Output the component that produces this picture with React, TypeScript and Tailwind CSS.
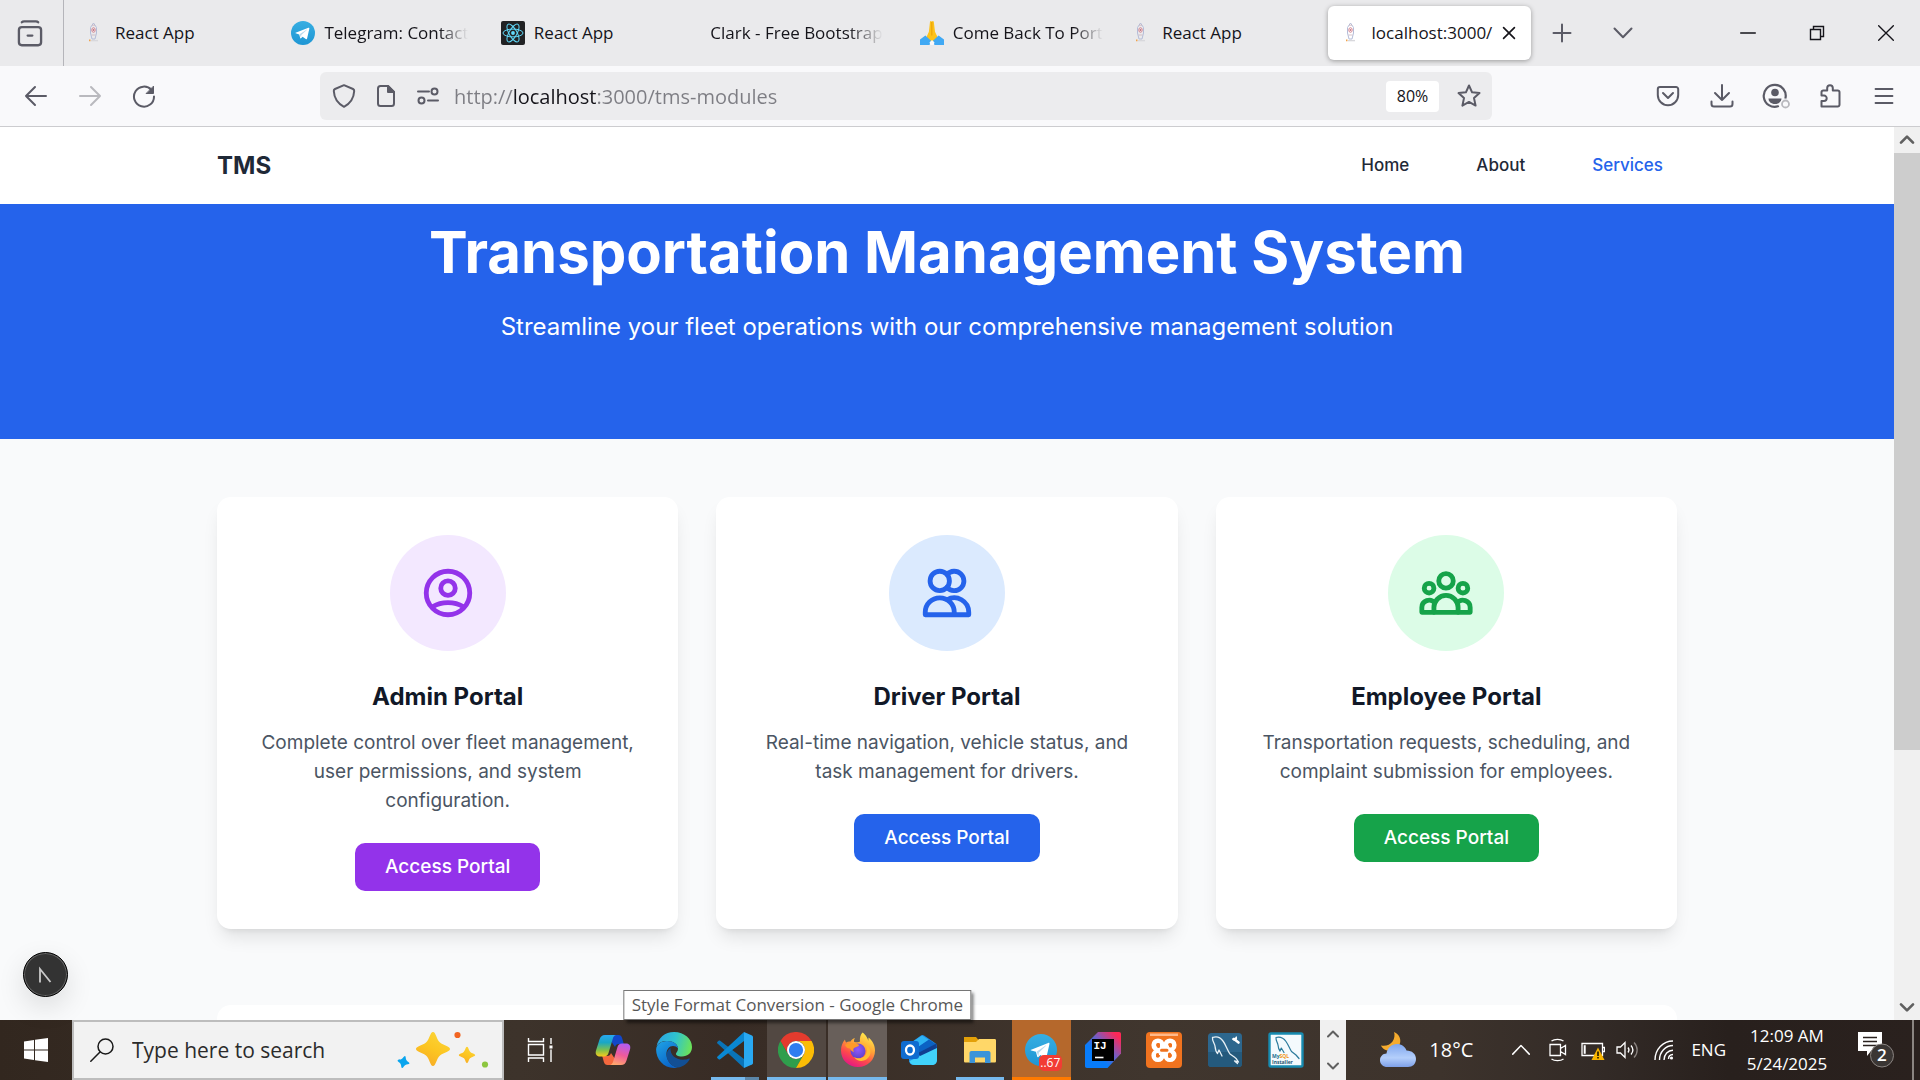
import React from "react";

const osFont = "font-['Open_Sans',sans-serif]";

/* ---------- browser icons ---------- */

function EmblemIcon() {
  return (
    <svg viewBox="0 0 24 24" className="size-6 shrink-0" fill="none" aria-hidden="true">
      <path d="M8.500 6.500 11.500 2l3 4.500v5.500l-1.500 6h-3l-1.500-6z" stroke="#b4bcd8" strokeWidth="1" />
      <path d="M10 4.200h3M9.500 14h4" stroke="#cdb4bd" strokeWidth=".8" />
      <ellipse cx="11.500" cy="9" rx="1.700" ry="2.300" stroke="#d68590" strokeWidth="1" />
      <circle cx="11.500" cy="9" r=".7" fill="#b33a4c" />
      <path d="M7 19.300h1.500" stroke="#f0a24b" strokeWidth="1.800" />
      <path d="M9 19.600h7" stroke="#d8d8dc" strokeWidth="1.400" />
    </svg>
  );
}

function TelegramLogo({ className }: { className: string }) {
  return (
    <svg viewBox="0 0 24 24" className={className} aria-hidden="true">
      <defs>
        <linearGradient id="tg" x1="0" y1="0" x2="0" y2="1">
          <stop offset="0" stopColor="#37aee2" />
          <stop offset="1" stopColor="#1e96d4" />
        </linearGradient>
      </defs>
      <circle cx="12" cy="12" r="12" fill="url(#tg)" />
      <path
        d="M4.600 11.800 17.400 6.700c.7-.2 1.100.1.9 1l-2.200 9.800c-.2.8-.7 1-1.300.6l-3.200-2.400-1.600 1.600c-.3.3-.7.2-.8-.2l-1-3.700-3.500-1.100c-.7-.2-.7-.3-.1-.5z"
        fill="#fff"
      />
      <path d="m8.600 13.300 6.900-4.600c.3-.2.600 0 .3.200l-5.500 5.200-.2 2.600z" fill="#b8d9ee" />
    </svg>
  );
}

function ReactLogo() {
  return (
    <svg viewBox="0 0 24 24" className="size-6 shrink-0" fill="none" aria-hidden="true">
      <rect width="24" height="24" rx="2" fill="#212224" />
      <circle cx="12" cy="12" r="1.900" fill="#61dafb" />
      <g stroke="#61dafb" strokeWidth="1">
        <ellipse cx="12" cy="12" rx="10" ry="3.900" />
        <ellipse cx="12" cy="12" rx="10" ry="3.900" transform="rotate(60 12 12)" />
        <ellipse cx="12" cy="12" rx="10" ry="3.900" transform="rotate(120 12 12)" />
      </g>
    </svg>
  );
}

function PrayLogo() {
  return (
    <svg viewBox="0 0 24 24" className="size-6 shrink-0" aria-hidden="true">
      <path d="M10 .8c.2-.9 1.400-.9 1.800-.1.500-.8 1.800-.8 2 .1l1.200 10 2.600 5.500-3.600 4.200h-4l-3.600-4.200L8.900 10.800z" fill="#fcc21b" />
      <path d="M11.800 1v13.500" stroke="#e59600" strokeWidth=".8" />
      <path d="M0 24v-5.500L5.400 14.500l5.600 5.200-1.500 4.300zM24 24v-5.500l-5.400-4-5.600 5.200 1.500 4.300z" fill="#40a9f4" />
      <path d="M9.500 21.500 12 19l2.500 2.500L13.500 24h-3z" fill="#f9f9fb" />
    </svg>
  );
}

type Stroke = { children: React.ReactNode; className?: string; width?: number };

function Line({ children, className = "size-6", width = 2 }: Stroke) {
  return (
    <svg
      viewBox="0 0 24 24"
      className={"shrink-0 " + className}
      fill="none"
      stroke="currentColor"
      strokeWidth={width}
      strokeLinecap="round"
      strokeLinejoin="round"
      aria-hidden="true"
    >
      {children}
    </svg>
  );
}

function BrowserTab({ title, icon, fade = false }: { title: string; icon?: React.ReactNode; fade?: boolean }) {
  return (
    <button
      role="tab"
      aria-selected="false"
      className="flex h-full min-w-0 items-center gap-[9px] pl-[14px] text-left"
    >
      {icon}
      <span className={"whitespace-nowrap " + (fade ? "mask-r-from-80% mask-r-to-100%" : "")}>{title}</span>
    </button>
  );
}

function TabStrip() {
  return (
    <div className="flex h-[66px] shrink-0 items-center bg-[#eaeaec] text-[17px] text-[#15141a]">
      <button aria-label="Firefox View" className="flex h-full w-[64px] shrink-0 items-center justify-center border-r border-[#b5b5ba] pr-1 text-[#5b5b66]">
        <Line className="size-7">
          <rect x="2.500" y="7" width="19" height="15.500" rx="2.500" />
          <path d="M10 14.200h4M5 2.800c.6-.7 1.200-.8 2-.8h10c.8 0 1.400.1 2 .8" />
        </Line>
      </button>
      <div role="tablist" aria-label="Open tabs" className="ml-1 grid h-full w-[1466px] min-w-0 grid-cols-7 items-center">
        <BrowserTab title="React App" icon={<EmblemIcon />} />
        <BrowserTab title="Telegram: Contact" fade icon={<TelegramLogo className="size-6 shrink-0" />} />
        <BrowserTab title="React App" icon={<ReactLogo />} />
        <BrowserTab title="Clark - Free Bootstrap" fade />
        <BrowserTab title="Come Back To Port" fade icon={<PrayLogo />} />
        <BrowserTab title="React App" icon={<EmblemIcon />} />
        <div className="min-w-0 px-[3px]">
          <div className="flex h-[54px] items-center justify-between rounded-md bg-white pr-3 shadow-[0_1px_5px_rgba(0,0,0,0.35)]">
            <button role="tab" aria-selected="true" className="flex h-full items-center gap-[9px] pl-[11px] text-left whitespace-nowrap">
              <EmblemIcon />
              localhost:3000/
            </button>
            <button aria-label="Close tab" className="flex h-full shrink-0 items-center justify-center">
              <Line className="size-5">
                <path d="m5.500 5.500 13 13m0-13-13 13" />
              </Line>
            </button>
          </div>
        </div>
      </div>
      <button aria-label="New tab" className="ml-[2px] flex h-full w-[52px] items-center justify-center text-[#5b5b66]">
        <Line className="size-6">
          <path d="M12 3.500v17M3.500 12h17" />
        </Line>
      </button>
      <button aria-label="List all tabs" className="ml-[9px] flex h-full w-[52px] items-center justify-center text-[#5b5b66]">
        <Line className="size-6">
          <path d="m3.500 7.500 8.500 8.700 8.500-8.700" />
        </Line>
      </button>
      <div className="ml-auto flex h-full">
        <button aria-label="Minimize" className="flex w-[69px] items-center justify-center">
          <Line className="size-4" width={2}>
            <path d="M1 12h22" />
          </Line>
        </button>
        <button aria-label="Restore" className="flex w-[69px] items-center justify-center">
          <svg viewBox="0 0 16 16" className="size-4" fill="none" stroke="currentColor" strokeWidth="1.400" aria-hidden="true">
            <path d="M1.500 4.500h10v10h-10zM4.500 4.500v-3h10v10h-3" />
          </svg>
        </button>
        <button aria-label="Close window" className="flex w-[69px] items-center justify-center">
          <Line className="size-4">
            <path d="m1 1 22 22m0-22L1 23" />
          </Line>
        </button>
      </div>
    </div>
  );
}

const toolButton = "flex h-full w-[54px] items-center justify-center";

function Toolbar() {
  return (
    <div className="flex h-[61px] shrink-0 items-center border-b border-[#cccccf] bg-[#f9f9fb] px-[9px] text-[#5b5b66]">
      <button aria-label="Back" className={toolButton}>
        <Line className="size-6"><path d="M22 12H2m9-9-9 9 9 9" /></Line>
      </button>
      <button aria-label="Forward" disabled className={toolButton + " text-[#b9b9be]"}>
        <Line className="size-6"><path d="M2 12h20m-9-9 9 9-9 9" /></Line>
      </button>
      <button aria-label="Reload" className={toolButton}>
        <Line className="size-6">
          <path d="M19.500 6A10 10 0 1 0 22 12.500" />
          <path d="M21.500 2.500v7h-7z" fill="currentColor" strokeWidth="1" />
        </Line>
      </button>
      <div className="ml-[149px] flex h-12 min-w-0 flex-1 items-center rounded-md bg-[#ececee] pl-[3px]">
        <span className="flex w-[42px] justify-center">
          <Line className="size-6">
            <path d="M12 1.200 21 5c1 .5 1.300 1 1.200 2-.3 6-2.700 11.800-10.200 15.800C4.500 18.800 2.100 13 1.800 7c-.1-1 .2-1.500 1.200-2z" />
          </Line>
        </span>
        <span className="flex w-[42px] justify-center">
          <Line className="size-6">
            <path d="M14 2H6.500A2.500 2.500 0 0 0 4 4.500v15A2.500 2.500 0 0 0 6.500 22h11a2.500 2.500 0 0 0 2.500-2.500V8z" />
            <path d="M14 2v6h6z" fill="currentColor" />
          </Line>
        </span>
        <span className="flex w-[42px] justify-center">
          <Line className="size-6">
            <path d="M2 7.500h11M12 16.500h10" />
            <circle cx="18.500" cy="7.500" r="3" />
            <circle cx="5.500" cy="16.500" r="3" />
          </Line>
        </span>
        <input
          aria-label="Address"
          defaultValue="http://localhost:3000/tms-modules"
          className="ml-[5px] h-full min-w-0 flex-1 bg-[linear-gradient(90deg,#7d7d83_58px,#15141a_58px,#15141a_142px,#7d7d83_142px)] bg-clip-text text-[20px] text-transparent outline-none"
        />
        <button className="h-[31px] w-[53px] rounded bg-white text-[16px] text-[#15141a]">80%</button>
        <button aria-label="Bookmark this page" className="ml-[7px] flex w-[46px] justify-center">
          <Line className="size-6">
            <path d="m12 1.500 3.100 6.800 7.400.8-5.500 5 1.600 7.500L12 17.900l-6.600 3.700L7 14.100l-5.500-5 7.400-.8z" />
          </Line>
        </button>
      </div>
      <div className="ml-[149px] flex h-full">
        <button aria-label="Save to Pocket" className={toolButton}>
          <Line className="size-6">
            <path d="M4 3h16a2.200 2.200 0 0 1 2.200 2.200V11a10.200 10.200 0 0 1-20.400 0V5.200A2.200 2.200 0 0 1 4 3z" />
            <path d="m7 9 5 5 5-5" />
          </Line>
        </button>
        <button aria-label="Downloads" className={toolButton}>
          <Line className="size-6"><path d="M12 1v15m-7-7 7 7 7-7M1.500 17.500v2.500A2.500 2.500 0 0 0 4 22.500h16a2.500 2.500 0 0 0 2.500-2.500v-2.500" /></Line>
        </button>
        <button aria-label="Account" className={toolButton}>
          <svg viewBox="0 0 28 26" className="h-[26px] w-7" fill="none" aria-hidden="true">
            <path d="M16 23.300A11 11 0 1 1 23.500 15" stroke="currentColor" strokeWidth="2.200" strokeLinecap="round" />
            <circle cx="13" cy="9.500" r="3.800" fill="currentColor" />
            <path d="M6.500 15.500h13c0 3-2.500 5.500-6.500 5.500s-6.500-2.500-6.500-5.500z" fill="currentColor" />
            <circle cx="23.500" cy="21" r="5.500" fill="#f9f9fb" />
            <circle cx="23.500" cy="21" r="3.500" stroke="#b9b9be" strokeWidth="1.800" />
          </svg>
        </button>
        <button aria-label="Extensions" className={toolButton}>
          <Line className="size-6">
            <path d="M3.500 22.500V17H6a2.700 2.700 0 0 0 0-5.400H3.500V8.200A1.700 1.700 0 0 1 5.200 6.500h4V4a2.800 2.800 0 0 1 5.600 0v2.500h5a1.700 1.700 0 0 1 1.700 1.700v12.600a1.700 1.700 0 0 1-1.700 1.700z" />
          </Line>
        </button>
        <button aria-label="Open application menu" className={toolButton}>
          <Line className="size-6" width={1.8}><path d="M3.500 5h17M3.500 12h17M3.500 19h17" /></Line>
        </button>
      </div>
    </div>
  );
}

/* ---------- page ---------- */

const portals = [
  {
    name: "Admin Portal",
    text: "Complete control over fleet management, user permissions, and system configuration.",
    circle: "bg-[#f3e8ff] text-[#9333ea]",
    button: "bg-[#9333ea]",
    icon: (
      <>
        <circle cx="12" cy="12" r="9" />
        <circle cx="12" cy="10" r="3" />
        <path d="M5.800 17.600C7.400 16.600 9.500 16 12 16s4.600.6 6.200 1.600" />
      </>
    ),
  },
  {
    name: "Driver Portal",
    text: "Real-time navigation, vehicle status, and task management for drivers.",
    circle: "bg-[#dbeafe] text-[#2563eb]",
    button: "bg-[#2563eb]",
    icon: (
      <>
        <circle cx="9" cy="7" r="4" />
        <path d="M12 4.354a4 4 0 1 1 0 5.292" />
        <path d="M3 21v-1a6 6 0 0 1 12 0v1zM12 14.803A6 6 0 0 1 21 20v1h-6" />
      </>
    ),
  },
  {
    name: "Employee Portal",
    text: "Transportation requests, scheduling, and complaint submission for employees.",
    circle: "bg-[#dcfce7] text-[#16a34a]",
    button: "bg-[#16a34a]",
    icon: (
      <>
        <circle cx="12" cy="7" r="3" />
        <circle cx="5" cy="10" r="2" />
        <circle cx="19" cy="10" r="2" />
        <path d="M7 20v-2a5 5 0 0 1 10 0v2z" />
        <path d="M17 20h5v-2a3 3 0 0 0-5.356-1.857M7 20H2v-2a3 3 0 0 1 5.356-1.857" />
      </>
    ),
  },
];

const container = "mx-auto w-full max-w-[1536px] px-[38px]";

function Page() {
  return (
    <div className="h-full overflow-hidden bg-[#f9fafb] font-[Inter,sans-serif]">
      <header className="bg-white">
        <div className={container + " flex h-[77px] items-center justify-between"}>
          <span className="text-2xl font-bold text-[#1f2937]">TMS</span>
          <nav className="flex gap-[39px] text-[17px] font-medium">
            <a href="#home" className="px-[14px] text-[#1f2937]">Home</a>
            <a href="#about" className="px-[14px] text-[#1f2937]">About</a>
            <a href="#services" className="px-[14px] text-[#2563eb]">Services</a>
          </nav>
        </div>
      </header>
      <section className="bg-[#2563eb] pt-[19px] pb-[95px] text-center text-white">
        <h1 className="mb-[29px] text-[58px] leading-[58px] font-bold">Transportation Management System</h1>
        <p className="text-2xl leading-[34px]">Streamline your fleet operations with our comprehensive management solution</p>
      </section>
      <main className={container + " pt-[58px]"}>
        <div className="grid grid-cols-3 gap-[38px]">
          {portals.map((p) => (
            <article
              key={p.name}
              className="flex flex-col items-center rounded-[14px] bg-white p-[38px] text-center shadow-[0_12px_18px_-4px_rgba(0,0,0,0.1),0_5px_7px_-5px_rgba(0,0,0,0.1)]"
            >
              <div className={"mb-[29px] flex size-[116px] items-center justify-center rounded-full " + p.circle}>
                <Line className="size-[58px]">{p.icon}</Line>
              </div>
              <h2 className="mb-[14px] text-2xl leading-[34px] font-bold text-[#111827]">{p.name}</h2>
              <p className="mb-7 text-[19px] leading-[29px] text-[#4b5563]">{p.text}</p>
              <button className={"h-12 rounded-[10px] px-[30px] text-[19px] font-medium text-white " + p.button}>Access Portal</button>
            </article>
          ))}
        </div>
        <div className="mt-[76px] h-24 rounded-[14px] bg-white" />
      </main>
    </div>
  );
}

function ScrollBar() {
  return (
    <div className="flex w-[26px] shrink-0 flex-col bg-[#f0f0f0] text-[#606060]">
      <button aria-label="Scroll up" className="flex h-[26px] items-center justify-center">
        <Line className="size-4" width={4}><path d="m3 16 9-9 9 9" /></Line>
      </button>
      <div className="flex-1">
        <div className="h-[71%] bg-[#cdcdcd]" />
      </div>
      <button aria-label="Scroll down" className="flex h-[26px] items-center justify-center">
        <Line className="size-4" width={4}><path d="m3 8 9 9 9-9" /></Line>
      </button>
    </div>
  );
}

/* ---------- taskbar icons ---------- */

function CopilotLogo() {
  return (
    <svg viewBox="0 0 36 36" className="size-9" aria-hidden="true">
      <defs>
        <linearGradient id="cpA" x1="0" y1="0" x2="0" y2="1">
          <stop offset="0" stopColor="#29a8f0" />
          <stop offset=".35" stopColor="#1aa7c4" />
          <stop offset=".7" stopColor="#7fc04b" />
          <stop offset="1" stopColor="#f7cb1c" />
        </linearGradient>
        <linearGradient id="cpB" x1=".6" y1="0" x2=".3" y2="1">
          <stop offset="0" stopColor="#b45cf0" />
          <stop offset=".5" stopColor="#ef5a9b" />
          <stop offset="1" stopColor="#ffa86c" />
        </linearGradient>
      </defs>
      <path d="M12 3h11.500c2 0 3 1 3.600 3l1.700 6H24c-2.500 0-3.300 1-4 3z" fill="#1247c9" />
      <path d="M24 33H12.500c-2 0-3-1-3.600-3l-1.700-6H12c2.500 0 3.300-1 4-3z" fill="#f4683e" />
      <path d="M10 3h11c-2 .5-2.700 2-3.300 4l-4.200 14c-.7 2.300-2 3.500-4.500 3.500H5c-3.500 0-5-2.500-4-6L4.500 7.500C5.500 4.500 7 3 10 3z" fill="url(#cpA)" />
      <path d="M26 33H15c2-.5 2.700-2 3.300-4l4.200-14c.7-2.300 2-3.500 4.500-3.500h4c3.500 0 5 2.500 4 6l-3.500 11c-1 3-2.500 4.500-5.500 4.500z" fill="url(#cpB)" />
    </svg>
  );
}

function EdgeLogo() {
  return (
    <svg viewBox="0 0 36 36" className="size-9" aria-hidden="true">
      <defs>
        <linearGradient id="edA" x1="0" y1=".3" x2="1" y2=".5">
          <stop offset="0" stopColor="#2ba4e4" />
          <stop offset=".5" stopColor="#2fc3cf" />
          <stop offset="1" stopColor="#6be35a" />
        </linearGradient>
        <linearGradient id="edB" x1="0" y1="0" x2=".6" y2="1">
          <stop offset="0" stopColor="#1fa4e6" />
          <stop offset="1" stopColor="#0a64c8" />
        </linearGradient>
      </defs>
      <path d="M.5 14.500C2 6 9 0 18 0c10.500 0 18 7 18 15 0 6-4.500 9.500-10 9.500-4.500 0-6.500-1.500-6-3 .6-1.500 2-2.500 2-5 0-4-4.500-7.500-11-7.500C6 9 2 11 .5 14.500z" fill="url(#edA)" />
      <path d="M.1 17.500C.3 12.500 5 9 11 9c6.500 0 11 3.500 11 7.500-1.500-1.800-3-2.500-5-2.500-4 0-7 4-6.500 9 .5 6 5 11.500 11.500 12.500C9.500 38 .1 28.500.1 17.500z" fill="url(#edB)" />
      <path d="M14.500 16c-2 1.500-4.200 4-4 7.500.4 6 5.500 11.500 11.500 12 5-.8 9.500-4 11.700-8.300.4-.7-.2-1-.8-.7-1.500.8-3.600 1.200-5.900 1.200-7.500 0-13-4.700-12.500-11.700z" fill="#124f94" />
    </svg>
  );
}

function VsCodeLogo() {
  return (
    <svg viewBox="0 0 36 36" className="size-9" aria-hidden="true">
      <path d="M27 36 .5 11.600c-.6-.5-.6-1.300 0-1.800L1.600 8.800c.5-.4 1.100-.4 1.600 0L27 27z" fill="#0a74b8" />
      <path d="M27 0 .5 24.400c-.6.5-.6 1.300 0 1.800l1.100 1c.5.400 1.100.400 1.600 0L27 9z" fill="#0a88d2" />
      <path d="m27 0 8 3.500c.6.300 1 .9 1 1.600v25.800c0 .7-.4 1.300-1 1.600L27 36z" fill="#29a9f2" />
    </svg>
  );
}

function ChromeLogo() {
  return (
    <svg viewBox="0 0 48 48" className="size-9" aria-hidden="true">
      <path d="M3.200 12A24 24 0 0 1 44.800 12H24A12 12 0 0 0 13.600 30z" fill="#e33b2e" />
      <path d="M24 48a24 24 0 0 1-20.800-36l10.400 18A12 12 0 0 0 34.400 30z" fill="#2f9e4c" />
      <path d="M44.800 12A24 24 0 0 1 24 48l10.400-18A12 12 0 0 0 24 12z" fill="#fbbc05" />
      <circle cx="24" cy="24" r="12" fill="#fff" />
      <circle cx="24" cy="24" r="9.500" fill="#2f7df0" />
    </svg>
  );
}

function FirefoxLogo() {
  return (
    <svg viewBox="0 0 36 36" className="size-9" aria-hidden="true">
      <defs>
        <linearGradient id="ffA" x1=".8" y1="0" x2=".3" y2="1">
          <stop offset="0" stopColor="#fff44f" />
          <stop offset=".4" stopColor="#ffa436" />
          <stop offset=".7" stopColor="#ff4a4b" />
          <stop offset="1" stopColor="#e31587" />
        </linearGradient>
        <radialGradient id="ffB" cx=".5" cy=".4" r=".7">
          <stop offset="0" stopColor="#9059ff" />
          <stop offset="1" stopColor="#5b3fc0" />
        </radialGradient>
      </defs>
      <path d="M22.500.5c4 3 5 6 6 8.500-.2-1.500-.1-2.500.2-3.500C33 9 35 14 35 18.500 35 28 27.500 35 18 35S1 28 1 18.500c0-4.500 1.500-8 4-11 .2 1.500.6 2.300 1.200 3C7.500 9.500 9 9.200 10.500 9.500c1-1.800 2.600-3 4.500-3.500-1 1.500-1.200 2.800-.8 4 2.800.6 5 .2 5.800-.5C19.500 6 20.500 2.500 22.500.5z" fill="url(#ffA)" />
      <circle cx="18" cy="19" r="7.500" fill="url(#ffB)" />
      <path d="M5 13c3-2 6.500-2.500 9.200-1.500 2.300-.2 4 .5 5 1.800-1.200 1.600-3.200 1.500-4.700 2.500-1.500.9-1.500 2.500-.5 4.200-2-.5-3.500-2-4-3.500-2 0-4-1-5-3.500z" fill="#ff9a28" />
      <path d="M24 11.500c3.500 3 4 8.500 1 12-2.500 3-7.500 3.800-11 1.500 4 6 13 5 16-2 1.500-4-.5-9.500-6-11.500z" fill="#ffbd30" />
    </svg>
  );
}

function OutlookLogo() {
  return (
    <svg viewBox="0 0 36 36" className="size-9" aria-hidden="true">
      <path d="M8 12 20 3.500c1-.7 2-.7 3 0L34 11c1.200.8 2 2 2 3.500V27c0 3.500-2.500 6-6 6H13c-3 0-5-2-5-5z" fill="#1f8fe8" />
      <path d="m9 11.500 12-8 7 4.500-14 9.500z" fill="#2fb4f4" />
      <path d="m14 17 14-9.500 7 4.800L18 23z" fill="#0b62c4" />
      <path d="m17 21 18.500-9.500.5 5L20 26z" fill="#103f91" />
      <path d="M36 16v12c0 3-2 5-5 5H14c-3 0-5-1.500-5.500-4z" fill="#41d3fb" />
      <rect y="9" width="18" height="18" rx="3" fill="#0f6cd0" />
      <ellipse cx="9" cy="18" rx="4" ry="4.500" fill="none" stroke="#fff" strokeWidth="2.300" />
    </svg>
  );
}

function ExplorerLogo() {
  return (
    <svg viewBox="0 0 36 36" className="size-9" aria-hidden="true">
      <path d="M2 5h12l3 3.500V14H2z" fill="#e3a008" />
      <path d="M17 7h15.500c1 0 1.500.5 1.500 1.500V29c0 1-.5 1.500-1.500 1.500h-29C2.500 30.500 2 30 2 29V10h12z" fill="#ffd768" />
      <path d="M7.500 31V21c0-1.200.8-2 2-2h17c1.200 0 2 .8 2 2v10h-5.500v-5.500H13V31z" fill="#3b94d9" />
    </svg>
  );
}

function IntelliJLogo() {
  return (
    <span className="relative flex size-9 items-center justify-center">
      <svg viewBox="0 0 36 36" className="size-9" aria-hidden="true">
        <defs>
          <linearGradient id="ijA" x1="0" y1="1" x2="1" y2="0">
            <stop offset=".35" stopColor="#087cfa" />
            <stop offset=".6" stopColor="#7a5bc0" />
            <stop offset=".9" stopColor="#fe2857" />
          </linearGradient>
        </defs>
        <path d="M13 0h21c1.300 0 2 .7 2 2v19.500L22.500 36H2c-1.300 0-2-.7-2-2V13z" fill="url(#ijA)" />
        <rect x="7" y="7" width="22" height="22" fill="#000" />
        <path d="M10 25.500h8.500" stroke="#fff" strokeWidth="1.600" />
      </svg>
      <span className="absolute top-[8px] left-[9px] font-['Liberation_Mono',monospace] text-[11px] leading-3 font-bold text-white">IJ</span>
    </span>
  );
}

function XamppLogo() {
  return (
    <svg viewBox="0 0 36 36" className="size-9" aria-hidden="true">
      <rect width="36" height="36" rx="4" fill="#f0731f" />
      <path d="M4 1.500h28v2.500H4z" fill="#ffb98a" />
      <g stroke="#fff" strokeWidth="4.600" fill="none" strokeLinejoin="round">
        <circle cx="12" cy="13" r="4.300" />
        <circle cx="24" cy="13" r="4.300" />
        <circle cx="12" cy="23.500" r="4.300" />
        <circle cx="24" cy="23.500" r="4.300" />
      </g>
      <path d="M13 13.500h10v9.500H13z" fill="#fff" />
      <path d="M12.500 12.500v2M23.500 22v2.500M11.500 24v-1.500M24.500 13v1M15.500 18.200h5.500" stroke="#f0731f" strokeWidth="3" strokeLinecap="round" />
    </svg>
  );
}

function WorkbenchLogo() {
  return (
    <svg viewBox="0 0 36 36" className="size-9" fill="none" aria-hidden="true">
      <rect x="1" y="1" width="34" height="34" rx="3.500" fill="#2d678e" />
      <path d="M1 20h34v11.500a3.500 3.500 0 0 1-3.500 3.500h-27A3.500 3.500 0 0 1 1 31.500z" fill="#245a7d" />
      <path d="M5.500 5.500c4-1.500 8 0 10.500 3.500 3 4 4 8.500 7 13l5 3.500c1.500 1 2.500 3 3.500 4.500l-4-1 3 2.500M5.500 5.500C5 9 7.500 11 8 14c.3 2.500.5 5.500 2.500 7.500L12 18l3 6" stroke="#e8f1f6" strokeWidth="1.300" strokeLinecap="round" strokeLinejoin="round" />
      <path d="m27 7 4.500 3.500" stroke="#fff" strokeWidth="2.600" strokeLinecap="round" />
      <path d="M24.800 6.500a2.800 2.800 0 0 0 4.200 1.800 2.800 2.800 0 0 0 .2-4.300l-1.400 2.200z" fill="#fff" />
    </svg>
  );
}

function InstallerLogo() {
  return (
    <svg viewBox="0 0 36 36" className="size-9" fill="none" aria-hidden="true">
      <rect x="1.500" y="1.500" width="33" height="33" rx="1.500" fill="#f4fafd" stroke="#178bb0" strokeWidth="2.400" />
      <path d="M8 5.500c4-1 7.500.5 10 4 2.500 3.600 3.300 6.500 5.500 10l4.500 3.500 3 3.500M8 5.500c-.3 3 1.500 5 2 7.500.2 2.300.6 4.300 2 6l1.300-3L16 20.500" stroke="#2b7a9b" strokeWidth="1.200" strokeLinecap="round" strokeLinejoin="round" />
      <text x="4" y="26" fontSize="5" fontWeight="700" fontFamily="Open Sans, sans-serif" fill="#1c6d92">
        My<tspan fill="#f29111">SQL</tspan>
      </text>
      <text x="4" y="31.500" fontSize="5" fontWeight="700" fontFamily="Open Sans, sans-serif" fill="#1c5672">Installer</text>
    </svg>
  );
}

function Sparkles() {
  const star = "M0-17C3-17 3.500-9 7-6.500 10-3.500 17-3 17 0S10 3.500 7 6.500C3.500 9 3 17 0 17s-3.500-8-7-10.500C-10 3.500-17 3-17 0s7-3.500 10-6.500C-3.500-9-3-17 0-17z";
  return (
    <svg viewBox="0 0 92 40" className="h-10 w-[92px] shrink-0" aria-hidden="true">
      <defs>
        <linearGradient id="spk" x1=".2" y1="1" x2=".7" y2="0">
          <stop offset="0" stopColor="#f7a928" />
          <stop offset=".5" stopColor="#fcc521" />
          <stop offset="1" stopColor="#fbd437" />
        </linearGradient>
      </defs>
      <path d={star} transform="translate(36 19)" fill="url(#spk)" />
      <path d={star} transform="translate(70 25) scale(.48)" fill="url(#spk)" />
      <path d={star} transform="translate(6.500 32) rotate(14) scale(.36)" fill="#0aa5ee" />
      <circle cx="60.500" cy="5" r="3.100" fill="#f26522" />
      <circle cx="88" cy="34.500" r="3.100" fill="#8cc63f" />
    </svg>
  );
}

type App = { label: string; logo: React.ReactNode; slot?: string; bar?: string; badge?: string; tooltip?: string };

const apps: App[] = [
  { label: "Copilot", logo: <CopilotLogo /> },
  { label: "Microsoft Edge", logo: <EdgeLogo /> },
  { label: "Visual Studio Code", logo: <VsCodeLogo />, bar: "w-12 border-r-[14px] border-[#5b86a8] bg-[#76b9ed]" },
  { label: "Google Chrome", logo: <ChromeLogo />, slot: "bg-[#524842]", bar: "w-full bg-[#76b9ed]", tooltip: "Style Format Conversion - Google Chrome" },
  { label: "Firefox", logo: <FirefoxLogo />, slot: "bg-[#685f5a]", bar: "w-full bg-[#76b9ed]" },
  { label: "Outlook", logo: <OutlookLogo /> },
  { label: "File Explorer", logo: <ExplorerLogo />, bar: "w-12 bg-[#76b9ed]" },
  { label: "Telegram", logo: <TelegramLogo className="size-8" />, slot: "bg-[#b5682c]", bar: "w-full bg-[#ff7a00]", badge: "..67" },
  { label: "IntelliJ IDEA", logo: <IntelliJLogo /> },
  { label: "XAMPP", logo: <XamppLogo /> },
  { label: "MySQL Workbench", logo: <WorkbenchLogo /> },
  { label: "MySQL Installer", logo: <InstallerLogo /> },
];

function AppButton({ label, logo, slot = "", bar, badge, tooltip }: App) {
  return (
    <div className="relative h-full">
      <button aria-label={label} className={"flex h-full w-[59px] items-center justify-center " + slot}>
        {logo}
      </button>
      {bar && (
        <span className="absolute bottom-0 left-0 flex w-[59px] justify-center">
          <span className={"h-[3px] " + bar} />
        </span>
      )}
      {badge && (
        <span className="absolute top-[35px] left-[27px] h-4 w-[23px] rounded-[5px] bg-[#f23c34] text-center text-[12px] leading-4 text-white">
          {badge}
        </span>
      )}
      {tooltip && (
        <span
          role="tooltip"
          className="absolute bottom-full left-1/2 z-10 flex h-[30px] -translate-x-1/2 items-center border border-[#767676] bg-white px-[7px] text-[17px] whitespace-nowrap text-[#575757] shadow-[3px_3px_3px_rgba(0,0,0,0.5)]"
        >
          {tooltip}
        </span>
      )}
    </div>
  );
}

function Taskbar() {
  return (
    <div className="flex h-[60px] shrink-0 items-stretch bg-[linear-gradient(90deg,#32271f_0%,#3d332b_27%,#382c25_38%,#40362e_60%,#3d332c_75%,#332b27_83%,#28201d_90%,#2a211e_100%)] text-white">
      <button aria-label="Start" className="flex w-[72px] shrink-0 items-center justify-center">
        <svg viewBox="0 0 24 24" className="size-6" fill="#fff" aria-hidden="true">
          <path d="M0 3.400 10 2v9.500H0zM11 1.800 24 0v11.500H11zM0 12.500h10V22L0 20.600zM11 12.500h13V24l-13-1.800z" />
        </svg>
      </button>
      <label className="flex w-[432px] shrink-0 items-center border-2 border-[#bdbdbd] bg-[#f2f2f2] pr-[13px] pl-4 text-[#1a1a1a]">
        <Line className="size-6" width={1.5}>
          <circle cx="15.500" cy="8.500" r="7.500" />
          <path d="M10 14 .8 23.200" />
        </Line>
        <input
          aria-label="Search"
          placeholder="Type here to search"
          className="ml-[18px] h-full min-w-0 flex-1 bg-transparent text-[21px] outline-none placeholder:text-[#2b2b2b]"
        />
        <Sparkles />
      </label>
      <button aria-label="Task View" className="flex w-[76px] shrink-0 items-center justify-center pr-1">
        <svg viewBox="0 0 26 24" className="h-6 w-[26px]" fill="none" stroke="#fff" strokeWidth="1.400" aria-hidden="true">
          <path d="M1.500 0v3.500h15V0M1.500 6.500h15v10.500h-15zM1.500 24v-4h15v4M24 0v6M24 11.500V24" />
          <rect x="22.500" y="7.500" width="3" height="3" fill="#fff" stroke="none" />
        </svg>
      </button>
      <div className="ml-[3px] grid w-[735px] shrink-0 grid-cols-12">
        {apps.map((app) => (
          <AppButton key={app.label} {...app} />
        ))}
      </div>
      <div className="ml-[2px] flex w-[26px] shrink-0 flex-col justify-between bg-[#f0f0f0] py-2 text-[#606060]">
        <button aria-label="Scroll apps up" className="flex justify-center">
          <Line className="size-3" width={4}><path d="m2 17 10-10 10 10" /></Line>
        </button>
        <button aria-label="Scroll apps down" className="flex justify-center">
          <Line className="size-3" width={4}><path d="m2 7 10 10L22 7" /></Line>
        </button>
      </div>
      <div className="ml-auto flex items-center">
        <button className="flex h-full items-center gap-[13px] pr-[20px] text-[20px]">
          <svg viewBox="0 0 36 36" className="size-9" aria-hidden="true">
            <defs>
              <linearGradient id="cloud" x1="0" y1="0" x2="0" y2="1">
                <stop offset="0" stopColor="#7fa6ee" />
                <stop offset=".6" stopColor="#b4cffb" />
                <stop offset="1" stopColor="#7ea0e8" />
              </linearGradient>
            </defs>
            <path d="M14 0c8 3 9 14 0 18-5 2-11 0-13-4.500 5 .8 9-.5 11.500-4C14.500 6.500 15 3 14 0z" fill="#f5ab2e" />
            <path d="M7.500 35C3 35 0 32 0 28.200s3-6.700 6.500-6.700c.8-5.500 5-9.500 10.500-9.500 4.500 0 8 2.500 9.500 6.500C32 18.500 36 22 36 27s-3.500 8-8 8z" fill="url(#cloud)" />
          </svg>
          18°C
        </button>
        <button aria-label="Show hidden icons" className="flex w-14 justify-center">
          <Line className="size-[22px]" width={1.6}><path d="m3 16.500 9-9.500 9 9.500" /></Line>
        </button>
        <button aria-label="Meet Now" className="flex w-[18px] justify-center">
          <svg viewBox="0 0 18 24" className="h-6 w-[18px]" fill="none" stroke="#fff" strokeWidth="1.300" aria-hidden="true">
            <path d="M2.500 3C5.500.8 11.500.8 14.500 3M2.500 21c3 2.200 9 2.200 12 0M1 6.500h10.500v11H1zM11.500 10.500 16.500 7.500v9l-5-3" />
          </svg>
        </button>
        <button aria-label="Battery" className="ml-[14px]">
          <svg viewBox="0 0 24 20" className="h-5 w-6" fill="none" aria-hidden="true">
            <path d="M1 3.500h20.500v12H1zM22 7.500h1.500v4H22" stroke="#fff" strokeWidth="1.300" />
            <path d="M2.700 5.200h2v8.600h-2z" fill="#fff" />
            <path d="M17 7.500 23.500 20h-13z" fill="#f8b500" />
            <path d="M17 11.500v4.500M17 17v1.500" stroke="#000" strokeWidth="1.400" />
          </svg>
        </button>
        <button aria-label="Volume" className="ml-[11px]">
          <svg viewBox="0 0 24 20" className="h-5 w-6" fill="none" stroke="#fff" strokeWidth="1.300" aria-hidden="true">
            <path d="M1 7v6h3.500l4.500 4.500v-15L4.500 7zM12 7.500c1.200 1.500 1.200 3.500 0 5M15 5.500c2.300 2.700 2.300 6.300 0 9" />
            <path d="M18 2.500c4.200 4.200 4.200 10.800 0 15" stroke="#8a8380" />
          </svg>
        </button>
        <button aria-label="Network" className="ml-[14px]">
          <svg viewBox="0 0 20 20" className="size-5" fill="none" stroke="#fff" strokeWidth="1.400" aria-hidden="true">
            <path d="M1 20C1 9.500 9 1 19 1M5.500 20C5.500 12 11.500 5.500 19 5.500M10 20c0-5.500 4-9.800 9-9.800M14.500 19c0-2.500 1.500-4.300 4.500-4.500" />
            <circle cx="17.500" cy="18" r="1.600" fill="#fff" stroke="none" />
          </svg>
        </button>
        <button className="ml-[17px] text-[17px]">ENG</button>
        <button className="ml-4 w-[90px] text-center text-[17px] leading-7">
          12:09 AM
          <br />
          5/24/2025
        </button>
        <button aria-label="2 new notifications" className="relative ml-[26px] flex h-full w-9 items-center">
          <svg viewBox="0 0 36 36" className="size-9" aria-hidden="true">
            <path d="M0 0h24v19H13l-4 5V19H0z" fill="#fff" />
            <path d="M5 5.500h14M5 9.500h14M5 13.500h14" stroke="#2a211e" strokeWidth="1.300" />
            <circle cx="24" cy="23.500" r="11.500" fill="#3b3634" stroke="#8a8481" />
          </svg>
          <span className="absolute top-[25px] left-[19px] text-[17px] leading-5 font-semibold">2</span>
        </button>
        <button aria-label="Show desktop" className="ml-[18px] h-full w-2 border-l-2 border-[#8b8581]" />
      </div>
    </div>
  );
}

export default function App() {
  return (
    <div className={"flex h-screen flex-col overflow-hidden " + osFont}>
      <TabStrip />
      <Toolbar />
      <div className="flex min-h-0 flex-1">
        <div className="relative min-w-0 flex-1">
          <Page />
          <button
            aria-label="Open Next.js Dev Tools"
            className="absolute bottom-[23px] left-[23px] flex size-[45px] items-center justify-center rounded-full border border-black bg-[#333] shadow-[0_10px_28px_rgba(0,0,0,0.12)] ring-1 ring-[#666] ring-inset"
          >
            <svg viewBox="0 0 20 20" className="size-5" fill="none" stroke="#c9c9c9" strokeWidth="1.800" aria-hidden="true">
              <path d="M4 17.500V4l10.500 13" />
            </svg>
          </button>
        </div>
        <ScrollBar />
      </div>
      <Taskbar />
    </div>
  );
}
